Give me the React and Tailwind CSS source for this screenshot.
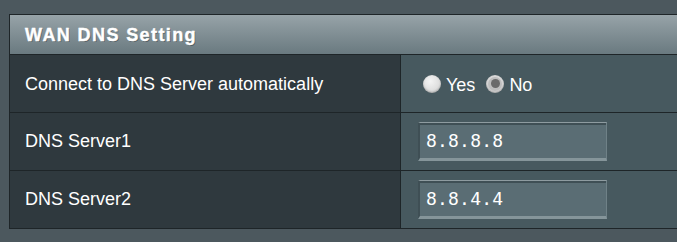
import React, { useState } from "react";

const ROWS = [
  { label: "DNS Server1", value: "8.8.8.8" },
  { label: "DNS Server2", value: "8.8.4.4" },
];

function Radio({ checked, label, onClick }) {
  return (
    <label className="flex items-center cursor-pointer select-none" onClick={onClick}>
      <span
        className={`relative w-[18px] h-[18px] rounded-full flex items-center justify-center -mt-[3px] shadow-[inset_0_-1px_2px_rgba(0,0,0,0.25)] ${
          checked ? "bg-[#d9d9d9]" : "bg-[radial-gradient(circle_at_40%_35%,#f4f4f4,#cfcfcf)]"
        }`}
      >
        {checked && (
          <span className="w-[14px] h-[14px] rounded-full bg-[#bdbdbd] flex items-center justify-center">
            <span className="w-[9px] h-[9px] rounded-full bg-[#6a6a6a]" />
          </span>
        )}
      </span>
      <span className="ml-[5px]">{label}</span>
    </label>
  );
}

function InputCell({ value }) {
  return (
    <div className="w-[189px] h-[39px] bg-[#5a6d74] border-t border-t-[#8e9ba0] border-b-[3px] border-b-[#85959a] border-l-2 border-l-[#3f4f55] border-r border-r-[#6f8187] shadow-[inset_0_2px_0_#3f4f55] flex items-center pl-[6px] text-white text-[18px] font-['DejaVu_Sans_Mono',monospace] tracking-[0.2px]">
      {value}
    </div>
  );
}

export default function App() {
  const [auto, setAuto] = useState(false);

  return (
    <div className="w-[677px] h-[242px] overflow-hidden bg-[#4c585e] font-['Liberation_Sans',Arial,sans-serif] text-white">
      <div className="ml-[9px] mt-[14px] w-[700px] border border-[#1e2528]">
        <div className="h-[40px] bg-gradient-to-b from-[#97a3a8] to-[#6a7a80] border-b border-[#1e2528] flex items-center pl-[15px] pt-[1px]">
          <span className="text-[18px] font-bold tracking-[1.4px] [-webkit-text-stroke:0.4px_white] [text-shadow:1px_1px_0_rgba(0,0,0,0.3)]">
            WAN DNS Setting
          </span>
        </div>

        <div className="grid grid-cols-[391px_1fr]">
          <div className="h-[57px] bg-[#2f393e] border-r border-[#1e2528] flex items-center pl-[15px] pt-[1px] text-[18px]">
            Connect to DNS Server automatically
          </div>
          <div className="h-[57px] bg-[#47595f] flex items-center pl-[22px] text-[18px] gap-[11px] pt-[3px]">
            <Radio checked={auto} label="Yes" onClick={() => setAuto(true)} />
            <Radio checked={!auto} label="No" onClick={() => setAuto(false)} />
          </div>

          {ROWS.map((r) => (
            <React.Fragment key={r.label}>
              <div className="h-[58px] bg-[#2f393e] border-t border-r border-[#1e2528] flex items-center pl-[15px] text-[18px]">
                {r.label}
              </div>
              <div className="h-[58px] bg-[#47595f] border-t border-[#1e2528] flex items-center pl-[17px]">
                <InputCell value={r.value} />
              </div>
            </React.Fragment>
          ))}
        </div>
      </div>
    </div>
  );
}
